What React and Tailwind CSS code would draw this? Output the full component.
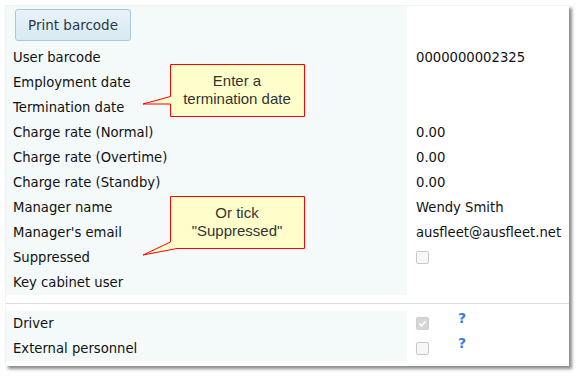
import React from 'react';

const rows = [
    { label: 'User barcode', value: '0000000002325' },
    { label: 'Employment date' },
    { label: 'Termination date' },
    { label: 'Charge rate (Normal)', value: '0.00' },
    { label: 'Charge rate (Overtime)', value: '0.00' },
    { label: 'Charge rate (Standby)', value: '0.00' },
    { label: 'Manager name', value: 'Wendy Smith' },
    { label: "Manager's email", value: 'ausfleet@ausfleet.net' },
    { label: 'Suppressed', checkbox: true },
    { label: 'Key cabinet user' },
];

const Checkbox = ({ checked }) => (
    <span className={`inline-flex w-[13px] h-[13px] items-center justify-center rounded-[2px] border ${checked ? 'bg-[#d6d6d6] border-[#cfcfcf]' : 'bg-[#f7f7f7] border-[#c8c8c8]'}`}>
        {checked && (
            <svg width="9" height="9" viewBox="0 0 10 10">
                <path d="M1.5 5.2 L4 7.5 L8.5 2.5" fill="none" stroke="#fff" strokeWidth="1.8" />
            </svg>
        )}
    </span>
);

const Row = ({ label, children }) => (
    <div className="flex h-[25px]">
        <div className="w-[401px] bg-[#f4f9f9] pl-[7px] flex items-center">{label}</div>
        <div className="flex-1 pl-[9px] flex items-center">{children}</div>
    </div>
);

const Callout = ({ top, tail, lines }) => (
    <div className="absolute left-[140px] w-[170px] h-[70px]" style={{ top }}>
        <svg className="absolute inset-0" width="170" height="70">
            <path d={tail} fill="#ffffcc" stroke="#ff0000" strokeWidth="1" />
        </svg>
        <div className="absolute left-[30px] top-[6px] w-[134px] h-[52px] flex flex-col items-center justify-center text-[15px] leading-[18px] text-[#333] font-['Liberation_Sans',Arial,sans-serif]">
            {lines.map((l) => <span key={l}>{l}</span>)}
        </div>
    </div>
);

const App = () => (
    <div className="w-[579px] h-[376px] bg-white relative font-['DejaVu_Sans',Verdana,sans-serif] text-[13.2px] text-[#111]">
        <div className="absolute left-[5px] top-[5px] w-[564px] h-[361px] bg-white border-t border-l border-[#eef2f2] shadow-[3px_3px_3px_rgba(0,0,0,0.45)] flex flex-col">
            <div className="flex h-[39px]">
                <div className="w-[401px] bg-[#f4f9f9] pl-[9px] pt-[3px]">
                    <button className="h-[32px] px-[12px] rounded-[3px] border border-[#a8c8d8] bg-gradient-to-b from-[#e8f2f8] to-[#d8e9f2] text-[#2a3a44] text-[13.5px]">
                        Print barcode
                    </button>
                </div>
                <div className="flex-1" />
            </div>
            {rows.map((r) => (
                <Row key={r.label} label={r.label}>
                    {r.checkbox ? <Checkbox /> : r.value}
                </Row>
            ))}
            <div className="h-[8px]" />
            <div className="border-t border-[#dcdcdc]" />
            <div className="h-[7px]" />
            <Row label="Driver">
                <Checkbox checked />
                <span className="ml-[29px] -mt-[10px] text-[#2f7fe6] font-bold text-[14px]">?</span>
            </Row>
            <Row label="External personnel">
                <Checkbox />
                <span className="ml-[29px] -mt-[10px] text-[#2f7fe6] font-bold text-[14px]">?</span>
            </Row>
        </div>
        <Callout
            top="58px"
            tail="M30.5 6.5 H164.5 V58.5 H30.5 V46 L3 46 L30.5 38.5 Z"
            lines={['Enter a', 'termination date']}
        />
        <Callout
            top="190px"
            tail="M30.5 6.5 H164.5 V58.5 H37 L3 65 L30.5 52 Z"
            lines={['Or tick', '"Suppressed"']}
        />
    </div>
);

export default App;
